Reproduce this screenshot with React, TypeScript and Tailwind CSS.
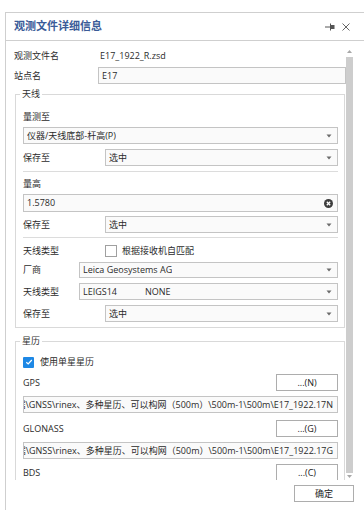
import React from "react";

const FONT = '"Open Sans", "Noto Sans CJK SC", sans-serif';

function Caret() {
  return (
    <svg width="6" height="4" viewBox="0 0 6 4" className="shrink-0">
      <path d="M0.5 0.5 L5.5 0.5 L3 3.5 Z" fill="#6b6b6b" />
    </svg>
  );
}

function Select({ children, h = "h-[17px]" }: { children: React.ReactNode; h?: string }) {
  return (
    <div className={`flex-1 ${h} flex items-center justify-between border border-[#c4c4c4] bg-[#fafafa] pl-[3px] pr-[5px] min-w-0`}>
      <div className="flex items-center whitespace-nowrap overflow-hidden">{children}</div>
      <Caret />
    </div>
  );
}

function Button({ children, w = "w-[62px]" }: { children: React.ReactNode; w?: string }) {
  return (
    <div className={`${w} h-[17px] border border-[#adadad] bg-white flex items-center justify-center text-[#222]`}>
      {children}
    </div>
  );
}

function PathInput({ text }: { text: string }) {
  return (
    <div className="h-[17px] border border-[#c4c4c4] bg-[#fafafa] flex items-center justify-end overflow-hidden pr-[4px]">
      <span className="shrink-0 whitespace-nowrap">{text}</span>
    </div>
  );
}

function GroupBox({ label, children, className }: { label: string; children: React.ReactNode; className?: string }) {
  return (
    <div className={`relative ml-[9px] w-[330px] border border-[#d9d9d9] pl-[7px] pr-[6px] ${className ?? ""}`}>
      <span className="absolute left-[4px] top-[-8px] bg-white px-[2px] leading-[14px] text-[#333]">{label}</span>
      {children}
    </div>
  );
}

export default function App() {
  const path = "D:\\数据\\GNSS\\rinex、多种星历、可以构网（500m）\\500m-1\\500m\\E17_1922.17";
  return (
    <div className="w-[364px] h-[519px] bg-white overflow-hidden pt-[12px] pl-[5px] text-[9px] text-[#2b2b2b]" style={{ fontFamily: FONT }}>
      <div className="h-[498px] border-l border-t border-[#cfcfcf] flex flex-col">
        {/* title bar */}
        <div className="h-[28px] shrink-0 flex items-center justify-between border-b border-[#cfcfcf] pl-[8px] pr-[14px]">
          <span className="text-[11px] font-bold text-[#3a5b98]">观测文件详细信息</span>
          <div className="flex items-center gap-[7px]">
            <svg width="10" height="8" viewBox="0 0 10 8">
              <path d="M0 4 H5" stroke="#555" strokeWidth="1" />
              <path d="M5.5 0.5 V7.5" stroke="#555" strokeWidth="1" />
              <rect x="6" y="2" width="3.5" height="4" fill="#555" />
            </svg>
            <svg width="8" height="8" viewBox="0 0 8 8">
              <path d="M0.5 0.5 L7.5 7.5 M7.5 0.5 L0.5 7.5" stroke="#666" strokeWidth="1" />
            </svg>
          </div>
        </div>

        {/* scroll area */}
        <div className="h-[439px] shrink-0 flex overflow-hidden">
          <div className="w-[340px] shrink-0 pt-[7px] overflow-hidden">
            <div className="h-[16px] flex items-center pl-[8px]">
              <span className="w-[86px]">观测文件名</span>
              <span>E17_1922_R.zsd</span>
            </div>
            <div className="mt-[3px] h-[17px] flex items-center pl-[8px]">
              <span className="w-[84px]">站点名</span>
              <div className="flex-1 h-full border border-[#c4c4c4] bg-[#fafafa] flex items-center pl-[3px]">E17</div>
            </div>

            <GroupBox label="天线" className="mt-[10px] pb-[5px]">
              <div className="mt-[14px] h-[16px] flex items-center">量测至</div>
              <div className="mt-[2px] flex">
                <Select>仪器/天线底部-杆高(P)</Select>
              </div>
              <div className="mt-[5px] flex items-center">
                <span className="w-[82px]">保存至</span>
                <Select>选中</Select>
              </div>
              <div className="mt-[5px] h-px bg-[#dcdcdc]" />
              <div className="mt-[4px] h-[16px] flex items-center">量高</div>
              <div className="mt-[2px] h-[18px] border border-[#c4c4c4] bg-[#fafafa] flex items-center justify-between pl-[3px] pr-[4px]">
                <span>1.5780</span>
                <svg width="9" height="9" viewBox="0 0 9 9">
                  <circle cx="4.5" cy="4.5" r="4.5" fill="#3d3d3d" />
                  <path d="M2.8 2.8 L6.2 6.2 M6.2 2.8 L2.8 6.2" stroke="#fff" strokeWidth="1.3" />
                </svg>
              </div>
              <div className="mt-[4px] flex items-center">
                <span className="w-[82px]">保存至</span>
                <Select>选中</Select>
              </div>
              <div className="mt-[4px] h-px bg-[#dcdcdc]" />
              <div className="mt-[5px] h-[16px] flex items-center">
                <span className="w-[82px]">天线类型</span>
                <span className="w-[12px] h-[12px] border border-[#a0a0a0] bg-white" />
                <span className="ml-[5px]">根据接收机自匹配</span>
              </div>
              <div className="mt-[3px] flex items-center">
                <span className="w-[56px]">厂商</span>
                <Select h="h-[16px]">Leica Geosystems AG</Select>
              </div>
              <div className="mt-[5px] flex items-center">
                <span className="w-[56px]">天线类型</span>
                <Select>
                  <span className="w-[62px]">LEIGS14</span>
                  <span>NONE</span>
                </Select>
              </div>
              <div className="mt-[5px] flex items-center">
                <span className="w-[82px]">保存至</span>
                <Select>选中</Select>
              </div>
            </GroupBox>

            <GroupBox label="星历" className="mt-[13px] pb-[20px]">
              <div className="mt-[14px] h-[12px] flex items-center">
                <span className="w-[11px] h-[11px] rounded-[1px] bg-[#1e88e5] flex items-center justify-center">
                  <svg width="8" height="8" viewBox="0 0 8 8">
                    <path d="M1.3 4.2 L3.2 6 L6.8 2" stroke="#fff" strokeWidth="1.2" fill="none" />
                  </svg>
                </span>
                <span className="ml-[6px]">使用单星星历</span>
              </div>
              <div className="mt-[6px] flex items-center justify-between">
                <span>GPS</span>
                <Button>...(N)</Button>
              </div>
              <div className="mt-[5px]">
                <PathInput text={path + "N"} />
              </div>
              <div className="mt-[7px] flex items-center justify-between">
                <span>GLONASS</span>
                <Button>...(G)</Button>
              </div>
              <div className="mt-[5px]">
                <PathInput text={path + "G"} />
              </div>
              <div className="mt-[5px] flex items-center justify-between">
                <span>BDS</span>
                <Button>...(C)</Button>
              </div>
            </GroupBox>
          </div>

          {/* scrollbar */}
          <div className="w-[7px] shrink-0 flex flex-col items-center pt-[9px]">
            <svg width="5" height="3" viewBox="0 0 5 3">
              <path d="M0 3 L2.5 0 L5 3 Z" fill="#a8a8a8" />
            </svg>
            <div className="mt-[4px] w-full h-[416px] bg-[#cdcdcd]" />
            <svg width="5" height="3" viewBox="0 0 5 3" className="mt-[2px]">
              <path d="M0 0 L5 0 L2.5 3 Z" fill="#a8a8a8" />
            </svg>
          </div>
        </div>

        {/* footer */}
        <div className="mt-[5px] flex justify-end pr-[10px]">
          <Button w="w-[60px]">确定</Button>
        </div>
      </div>
    </div>
  );
}
